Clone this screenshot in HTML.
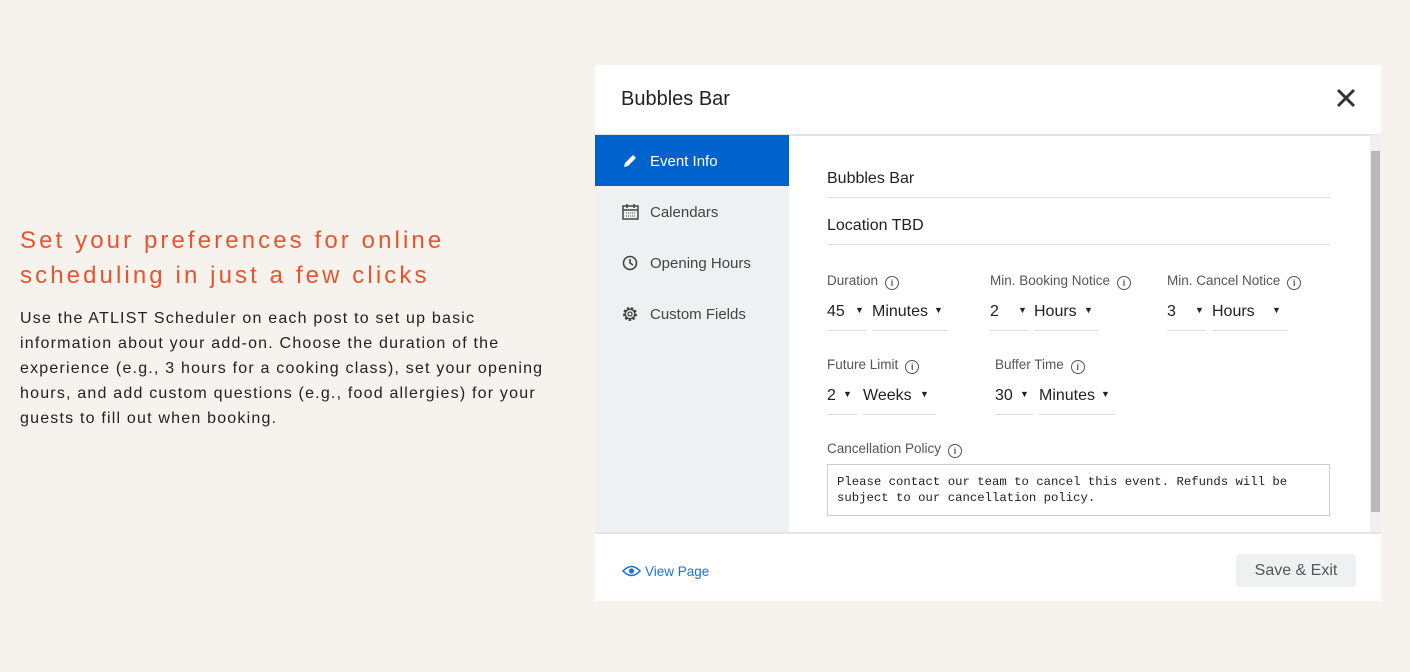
<!DOCTYPE html>
<html><head><style>
*{margin:0;padding:0;box-sizing:border-box}
body{width:1410px;height:672px;background:#f6f2ee;font-family:"Liberation Sans",sans-serif;position:relative;overflow:hidden}
.a{position:absolute}
h2{position:absolute;left:20px;top:223px;color:#e9542c;font-weight:400;font-size:24px;line-height:35px;letter-spacing:3.1px}
.p{left:20px;top:306px;white-space:nowrap;font-size:16px;line-height:25px;color:#222;letter-spacing:1.2px}
.card{left:595px;top:65px;width:786px;height:536px;background:#fff}
.side{left:0;top:70px;width:194px;height:397px;background:#eff0f2}
.nav{position:absolute;left:0;width:194px;height:51px;font-size:15px;color:#444;padding-left:55px;line-height:53px}
.nav svg{position:absolute;left:27px;top:18px}
.lbl{font-size:13.5px;color:#555}
.f{font-size:16px;color:#222;padding-top:2px}
.ul{border-bottom:1.5px solid #ddd;height:30px}
.i{display:inline-block;width:14px;height:14px;border:1.3px solid #555;border-radius:50%;font-size:9px;text-align:center;line-height:12px;font-weight:bold;color:#555;vertical-align:-1px;margin-left:7px}
.c{position:absolute;top:4px;font-size:9px;color:#222}
</style></head><body>
<h2>Set your preferences for online<br>scheduling in just a few clicks</h2>
<div class="a p">Use the ATLIST Scheduler on each post to set up basic<br>information about your add-on. Choose the duration of the<br>experience (e.g., 3 hours for a cooking class), set your opening<br>hours, and add custom questions (e.g., food allergies) for your<br>guests to fill out when booking.</div>
<div class="a card">
 <div class="a" style="left:26px;top:23px;font-size:20px;color:#222">Bubbles Bar</div>
 <svg class="a" style="left:741px;top:23px" width="20" height="20" viewBox="0 0 20 20"><path d="M2 2L18 18M18 2L2 18" stroke="#333" stroke-width="3"/></svg>
 <div class="a" style="left:0;top:69px;width:786px;height:1.5px;background:#e4e4e4"></div>
 <div class="a side">
  <div class="nav" style="top:0;background:#0062cc;color:#fff"><svg width="16" height="16" viewBox="0 0 16 16"><path d="M2 14l1-4 8-8 3 3-8 8z" fill="#fff"/></svg>Event Info</div>
  <div class="nav" style="top:51px"><svg width="17" height="16" viewBox="0 0 17 16"><rect x="1" y="2" width="15" height="13" fill="none" stroke="#444" stroke-width="1.5"/><path d="M1 6h15M5 0v4M12 0v4" stroke="#444" stroke-width="1.5"/><path d="M4 9h9M4 12h9" stroke="#444" stroke-dasharray="1 1"/></svg>Calendars</div>
  <div class="nav" style="top:102px"><svg width="16" height="16" viewBox="0 0 16 16"><circle cx="8" cy="8" r="6.5" fill="none" stroke="#444" stroke-width="1.6"/><path d="M8 4v4l3 2" fill="none" stroke="#444" stroke-width="1.6"/></svg>Opening Hours</div>
  <div class="nav" style="top:153px"><svg width="16" height="16" viewBox="0 0 16 16"><circle cx="8" cy="8" r="5.5" fill="none" stroke="#444" stroke-width="3" stroke-dasharray="2.2 1.6"/><circle cx="8" cy="8" r="4.8" fill="none" stroke="#444" stroke-width="1.4"/><circle cx="8" cy="8" r="2" fill="none" stroke="#444" stroke-width="1.3"/></svg>Custom Fields</div>
 </div>
 <div class="a" style="left:775px;top:70px;width:11px;height:397px;background:#f0f0f0"></div>
 <div class="a" style="left:776px;top:86px;width:9px;height:361px;background:#b8b8b8"></div>
 <div class="a f ul" style="left:232px;top:103px;width:503px">Bubbles Bar</div>
 <div class="a f ul" style="left:232px;top:150px;width:503px">Location TBD</div>
 <div class="a lbl" style="left:232px;top:208px">Duration<span class="i">i</span></div>
 <div class="a lbl" style="left:395px;top:208px">Min. Booking Notice<span class="i">i</span></div>
 <div class="a lbl" style="left:572px;top:208px">Min. Cancel Notice<span class="i">i</span></div>
 <div class="a f ul" style="left:232px;top:236px;width:39px">45<span class="c" style="left:28px">▼</span></div>
 <div class="a f ul" style="left:277px;top:236px;width:76px">Minutes<span class="c" style="left:62px">▼</span></div>
 <div class="a f ul" style="left:395px;top:236px;width:39px">2<span class="c" style="left:28px">▼</span></div>
 <div class="a f ul" style="left:439px;top:236px;width:64px">Hours<span class="c" style="left:50px">▼</span></div>
 <div class="a f ul" style="left:572px;top:236px;width:39px">3<span class="c" style="left:28px">▼</span></div>
 <div class="a f ul" style="left:617px;top:236px;width:75px">Hours<span class="c" style="left:60px">▼</span></div>
 <div class="a lbl" style="left:232px;top:292px">Future Limit<span class="i">i</span></div>
 <div class="a lbl" style="left:400px;top:292px">Buffer Time<span class="i">i</span></div>
 <div class="a f ul" style="left:232px;top:320px;width:30px">2<span class="c" style="left:16px">▼</span></div>
 <div class="a f ul" style="left:268px;top:320px;width:72px">Weeks<span class="c" style="left:57px">▼</span></div>
 <div class="a f ul" style="left:400px;top:320px;width:38px">30<span class="c" style="left:25px">▼</span></div>
 <div class="a f ul" style="left:444px;top:320px;width:76px">Minutes<span class="c" style="left:62px">▼</span></div>
 <div class="a lbl" style="left:232px;top:376px">Cancellation Policy<span class="i">i</span></div>
 <div class="a" style="left:232px;top:399px;width:503px;height:52px;border:1.3px solid #ccc;font-family:'Liberation Mono',monospace;font-size:12.3px;line-height:16px;padding:9px 9px;color:#222">Please contact our team to cancel this event. Refunds will be subject to our cancellation policy.</div>
 <div class="a" style="left:0;top:467px;width:786px;height:1.5px;background:#e4e4e4"></div>
 <div class="a" style="left:27px;top:499px;font-size:13.5px;color:#1a73d9"><svg width="19" height="12" viewBox="0 0 19 12" style="vertical-align:-1px;margin-right:4px"><path d="M1 6Q9.5-3 18 6Q9.5 15 1 6z" fill="none" stroke="#1a73d9" stroke-width="1.6"/><circle cx="9.5" cy="6" r="2.6" fill="#1a73d9"/></svg>View Page</div>
 <div class="a" style="left:641px;top:489px;width:120px;height:33px;background:#eef0f2;border-radius:3px;font-size:16px;color:#555;text-align:center;line-height:33px">Save &amp; Exit</div>
</div>
</body></html>
